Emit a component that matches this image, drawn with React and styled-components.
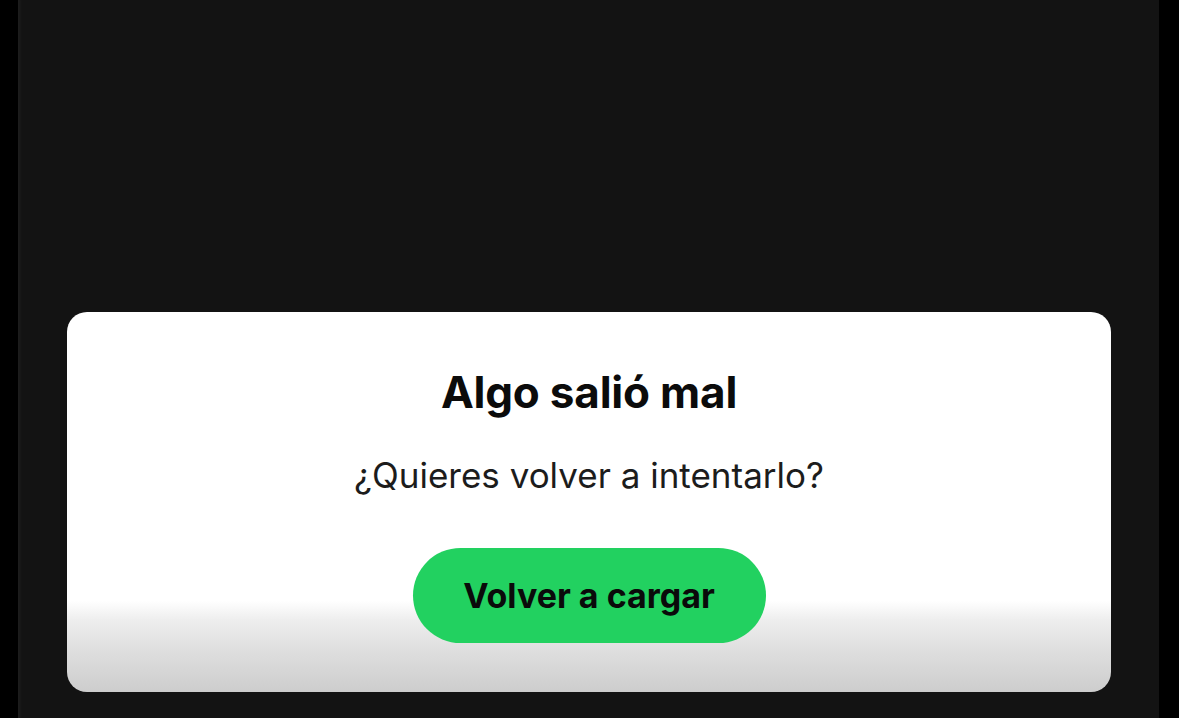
import React from "react";
import styled, { createGlobalStyle } from "styled-components";

const GlobalStyle = createGlobalStyle`
  html, body {
    margin: 0;
    padding: 0;
    background: #000;
    font-family: "Inter", "Liberation Sans", sans-serif;
  }
  #root {
    height: 718px;
  }
`;

const Screen = styled.div`
  height: 718px;
  padding: 0 20px 0 18px;
  box-sizing: border-box;
  background: #000;
  display: flex;
`;

const Panel = styled.main`
  flex: 1;
  background: #131313;
  box-shadow: inset 4px 0 3px -2px #1f1f1f;
  display: flex;
  flex-direction: column;
  justify-content: flex-end;
  padding: 0 48px 26px 49px;
`;

const Card = styled.section`
  height: 380px;
  box-sizing: border-box;
  border-radius: 20px;
  background: linear-gradient(
    to bottom,
    #ffffff 0%,
    #ffffff 76%,
    #eeeeee 81%,
    #dddddd 90%,
    #cdcdcd 100%
  );
  display: flex;
  flex-direction: column;
  align-items: center;
  padding-top: 54px;
`;

const Title = styled.h2`
  margin: 0;
  font-size: 44px;
  line-height: 52px;
  font-weight: 700;
  color: #0b0b0b;
  letter-spacing: -0.2px;
`;

const Message = styled.p`
  margin: 36px 0 0;
  font-size: 35px;
  line-height: 42px;
  font-weight: 400;
  color: #1c1c1c;
`;

const ReloadButton = styled.button`
  margin-top: 52px;
  width: 353px;
  height: 95px;
  border: none;
  border-radius: 48px;
  background: #22d160;
  color: #0a0a0a;
  font-family: inherit;
  font-size: 34px;
  font-weight: 700;
  cursor: pointer;
`;

export default function App() {
  return (
    <>
      <GlobalStyle />
      <Screen>
        <Panel>
          <Card>
            <Title>Algo salió mal</Title>
            <Message>¿Quieres volver a intentarlo?</Message>
            <ReloadButton>Volver a cargar</ReloadButton>
          </Card>
        </Panel>
      </Screen>
    </>
  );
}
